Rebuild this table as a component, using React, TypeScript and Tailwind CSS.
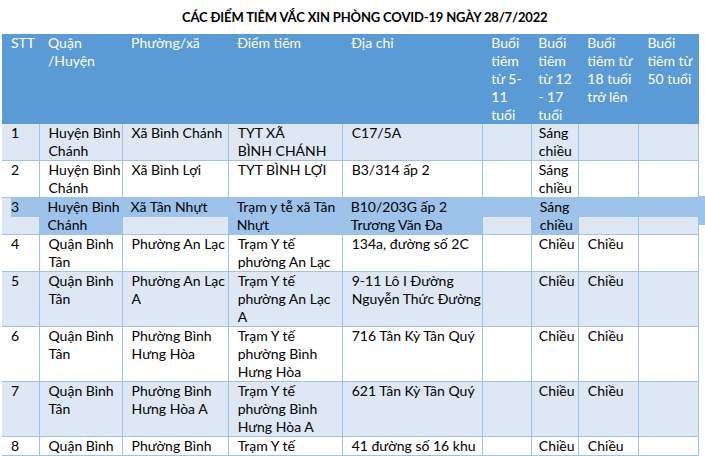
const HL = 'bg-[#9dc3ea]'

type Row = { cells: string[][]; band: boolean }

const rows: Row[] = [
  { band: true, cells: [['1'], ['Huyện Bình', 'Chánh'], ['Xã Bình Chánh'], ['TYT XÃ', 'BÌNH CHÁNH'], ['C17/5A'], [], ['Sáng', 'chiều'], [], []] },
  { band: false, cells: [['2'], ['Huyện Bình', 'Chánh'], ['Xã Bình Lợi'], ['TYT BÌNH LỢI'], ['B3/314 ấp 2'], [], ['Sáng', 'chiều'], [], []] },
  { band: false, cells: [['4'], ['Quận Bình', 'Tân'], ['Phường An Lạc'], ['Trạm Y tế', 'phường An Lạc'], ['134a, đường số 2C'], [], ['Chiều'], ['Chiều'], []] },
  { band: true, cells: [['5'], ['Quận Bình', 'Tân'], ['Phường An Lạc', 'A'], ['Trạm Y tế', 'phường An Lạc', 'A'], ['9-11 Lô I Đường', 'Nguyễn Thức Đường'], [], ['Chiều'], ['Chiều'], []] },
  { band: false, cells: [['6'], ['Quận Bình', 'Tân'], ['Phường Bình', 'Hưng Hòa'], ['Trạm Y tế', 'phường Bình', 'Hưng Hòa'], ['716 Tân Kỳ Tân Quý'], [], ['Chiều'], ['Chiều'], []] },
  { band: true, cells: [['7'], ['Quận Bình', 'Tân'], ['Phường Bình', 'Hưng Hòa A'], ['Trạm Y tế', 'phường Bình', 'Hưng Hòa A'], ['621 Tân Kỳ Tân Quý'], [], ['Chiều'], ['Chiều'], []] },
  { band: false, cells: [['8'], ['Quận Bình'], ['Phường Bình'], ['Trạm Y tế'], ['41 đường số 16 khu'], [], ['Chiều'], ['Chiều'], []] },
]

const widths = ['w-[37px]', 'w-[83px]', 'w-[106px]', 'w-[114px]', 'w-[140px]', 'w-[49px]', 'w-[47px]', 'w-[60px]', 'w-[60px]']

const headers = [
  ['STT'],
  ['Quận', '/Huyện'],
  ['Phường/xã'],
  ['Điểm tiêm'],
  ['Địa chỉ'],
  ['Buổi', 'tiêm', 'từ 5-', '11', 'tuổi'],
  ['Buổi', 'tiêm', 'từ 12', '- 17', 'tuổi'],
  ['Buổi', 'tiêm từ', '18 tuổi', 'trở lên'],
  ['Buổi', 'tiêm từ', '50 tuổi'],
]

const Lines = ({ lines }: { lines: string[] }) => (
  <>
    {lines.map((l, i) => (
      <div key={i} className="whitespace-nowrap">{l}</div>
    ))}
  </>
)

const cellBorder = 'border-r border-b border-[#9dc3e6] align-top'

// row 3 is partly selected, like a text selection in the browser
const SelectedRow = () => {
  const full = `${cellBorder} ${HL} px-[8px]`
  const top = `${cellBorder} bg-[#dde8f4] p-0`
  return (
    <tr className="bg-[#dde8f4]">
      <td className={top}>
        <div className={`ml-[9px] h-[19px] ${HL}`}>3</div>
      </td>
      <td className={full}><Lines lines={['Huyện Bình', 'Chánh']} /></td>
      <td className={top}><div className={`h-[19px] px-[8px] ${HL} whitespace-nowrap`}>Xã Tân Nhựt</div></td>
      <td className={full}><Lines lines={['Trạm y tễ xã Tân', 'Nhựt']} /></td>
      <td className={full}><Lines lines={['B10/203G ấp 2', 'Trương Văn Đa']} /></td>
      <td className={top}><div className={`h-[19px] ${HL}`} /></td>
      <td className={`${full} px-[7px]`}><Lines lines={['Sáng', 'chiều']} /></td>
      <td className={top}><div className={`h-[19px] ${HL}`} /></td>
      <td className={top}><div className={`h-[19px] ${HL}`} /></td>
    </tr>
  )
}

const App = () => {
  return (
    <div className="w-[705px] h-[456px] overflow-hidden bg-white text-black text-[14px] leading-[18px] font-['Lato',sans-serif]">
      <div className="h-[34px] flex items-center pl-[182px] font-bold text-[13px] tracking-[-0.15px]">
        CÁC ĐIỂM TIÊM VẮC XIN PHÒNG COVID-19 NGÀY 28/7/2022
      </div>
      <div className="relative pl-[2px]">
        <table className="table-fixed border-collapse w-[697px]">
          <colgroup>
            {widths.map((w, i) => <col key={i} className={w} />)}
          </colgroup>
          <thead>
            <tr className="bg-[#5b9bd5] text-white h-[90px]">
              {headers.map((h, i) => (
                <th key={i} className={`align-top text-left font-normal p-0 ${i === 6 ? 'pl-[7px]' : 'pl-[9px]'}`}>
                  <Lines lines={h} />
                </th>
              ))}
            </tr>
          </thead>
          <tbody>
            {rows.slice(0, 2).map((r, ri) => (
              <tr key={ri} className={r.band ? 'bg-[#dde8f4]' : 'bg-white'}>
                {r.cells.map((c, ci) => (
                  <td key={ci} className={`${cellBorder} ${ci === 6 ? 'px-[7px]' : 'px-[9px]'}`}>
                    <Lines lines={c} />
                  </td>
                ))}
              </tr>
            ))}
            <SelectedRow />
            {rows.slice(2).map((r, ri) => (
              <tr key={ri} className={r.band ? 'bg-[#dde8f4]' : 'bg-white'}>
                {r.cells.map((c, ci) => (
                  <td key={ci} className={`${cellBorder} ${ci === 6 ? 'px-[7px]' : 'px-[9px]'}`}>
                    <Lines lines={c} />
                  </td>
                ))}
              </tr>
            ))}
          </tbody>
        </table>
        <div className={`absolute left-[699px] top-[162px] w-[6px] h-[29px] ${HL}`} />
      </div>
    </div>
  )
}

export default App
